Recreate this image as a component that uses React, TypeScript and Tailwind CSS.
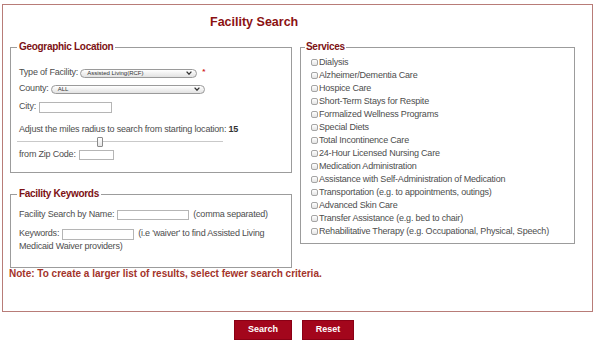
import React from "react";

const services = [
  "Dialysis",
  "Alzheimer/Dementia Care",
  "Hospice Care",
  "Short-Term Stays for Respite",
  "Formalized Wellness Programs",
  "Special Diets",
  "Total Incontinence Care",
  "24-Hour Licensed Nursing Care",
  "Medication Administration",
  "Assistance with Self-Administration of Medication",
  "Transportation (e.g. to appointments, outings)",
  "Advanced Skin Care",
  "Transfer Assistance (e.g. bed to chair)",
  "Rehabilitative Therapy (e.g. Occupational, Physical, Speech)",
];

function Chevron() {
  return (
    <svg width="6" height="4" viewBox="0 0 6 4" className="shrink-0">
      <path d="M0.6 0.6 L3 3.2 L5.4 0.6" fill="none" stroke="#333" strokeWidth="1.3" />
    </svg>
  );
}

function FakeSelect({ value, w }: { value: string; w: string }) {
  return (
    <div
      className={`${w} h-[9px] rounded-full border border-[#9a9a9a] bg-gradient-to-b from-white to-[#e2e2e2] flex items-center justify-between pl-[6px] pr-[4px] text-[6px] leading-[7px] tracking-normal text-[#333]`}
    >
      <span>{value}</span>
      <Chevron />
    </div>
  );
}

export default function App() {
  return (
    <div className="w-[600px] h-[347px] bg-white font-['Liberation_Sans',Arial,sans-serif] text-[#4d4d4d]">
      <div className="pt-[4px] pl-[2px]">
        <div className="w-[591px] h-[308px] border border-[#b87c78]">
          <h1 className="mt-[10px] ml-[207px] text-[12.5px] leading-[15px] font-bold text-[#8b1212]">
            Facility Search
          </h1>
          <div className="flex mt-[11px] ml-[7px] gap-[8px] items-start">
            <div className="w-[282px] flex flex-col">
              {/* Geographic Location */}
              <fieldset className="h-[132px] border border-[#9c9c9c] pl-[6px] pr-[4px]">
                <legend className="px-[2px] text-[10px] leading-[12px] font-bold tracking-[-0.3px] text-[#7d1114]">
                  Geographic Location
                </legend>
                <div className="pl-[2px] text-[9px] tracking-[-0.2px]">
                  <div className="mt-[14px] h-[12px] flex items-center gap-[2px]">
                    <span>Type of Facility:</span>
                    <FakeSelect value="Assisted Living(RCF)" w="w-[117px]" />
                    <span className="ml-[3px] text-[#d0201a] text-[8px] font-bold leading-[8px] self-start mt-[1px]">*</span>
                  </div>
                  <div className="mt-[4px] h-[12px] flex items-center gap-[2px]">
                    <span>County:</span>
                    <FakeSelect value="ALL" w="w-[154px]" />
                  </div>
                  <div className="mt-[6px] h-[12px] flex items-center gap-[3px]">
                    <span>City:</span>
                    <div className="w-[73px] h-[11px] border border-[#b5b5b5] bg-white" />
                  </div>
                  <div className="mt-[11px] h-[12px] flex items-center">
                    <span>
                      Adjust the miles radius to search from starting location: <b className="text-[#333]">15</b>
                    </span>
                  </div>
                  <div className="relative mt-[1px] -ml-[2px] w-[206px] h-[10px]">
                    <div className="absolute left-0 right-0 top-[4px] h-px bg-[#c9c9c9]" />
                    <div className="absolute left-[80px] top-0 w-[6px] h-[10px] rounded-[1px] border border-[#8a8a8a] bg-gradient-to-b from-white to-[#e6e6e6]" />
                  </div>
                  <div className="mt-[2px] h-[12px] flex items-center gap-[3px]">
                    <span>from Zip Code:</span>
                    <div className="w-[35px] h-[10px] border border-[#b5b5b5] bg-white" />
                  </div>
                </div>
              </fieldset>

              {/* Facility Keywords */}
              <fieldset className="mt-[15px] h-[80px] border border-[#9c9c9c] pl-[6px] pr-[4px]">
                <legend className="px-[2px] text-[10px] leading-[12px] font-bold tracking-[-0.3px] text-[#7d1114]">
                  Facility Keywords
                </legend>
                <div className="pl-[2px] text-[9px] tracking-[-0.2px]">
                  <div className="mt-[9px] h-[12px] flex items-center gap-[3px]">
                    <span>Facility Search by Name:</span>
                    <div className="w-[72px] h-[10px] border border-[#b5b5b5] bg-white" />
                    <span className="ml-[1px]">(comma separated)</span>
                  </div>
                  <div className="mt-[7px] h-[12px] flex items-center gap-[3px]">
                    <span>Keywords:</span>
                    <div className="w-[72px] h-[11px] border border-[#b5b5b5] bg-white" />
                    <span className="ml-[1px]">(i.e 'waiver' to find Assisted Living</span>
                  </div>
                  <div className="leading-[12px]">Medicaid Waiver providers)</div>
                </div>
              </fieldset>
            </div>

            {/* Services */}
            <fieldset className="w-[275px] h-[203px] border border-[#9c9c9c] pl-[4px]">
              <legend className="px-[1px] text-[10px] leading-[12px] font-bold tracking-[-0.3px] text-[#7d1114]">
                Services
              </legend>
              <div className="pt-[3px] pl-[6px] text-[9px] tracking-[-0.2px]">
                {services.map((s) => (
                  <label key={s} className="flex items-center h-[13px]">
                    <span className="w-[7px] h-[7px] mr-[1px] rounded-[2px] border border-[#a5a5a5] bg-gradient-to-b from-white to-[#e4e4e4] shrink-0" />
                    <span>{s}</span>
                  </label>
                ))}
              </div>
            </fieldset>
          </div>
          <p className="ml-[6px] text-[10px] leading-[12px] font-bold text-[#a3332a]">
            Note: To create a larger list of results, select fewer search criteria.
          </p>
        </div>

        <div className="flex mt-[8px] ml-[232px] gap-[10px]">
          <button className="w-[58px] h-[20px] bg-[#a3061c] border border-[#8a0015] text-white text-[9px] font-bold flex items-center justify-center">
            Search
          </button>
          <button className="w-[52px] h-[20px] bg-[#a3061c] border border-[#8a0015] text-white text-[9px] font-bold flex items-center justify-center">
            Reset
          </button>
        </div>
      </div>
    </div>
  );
}
